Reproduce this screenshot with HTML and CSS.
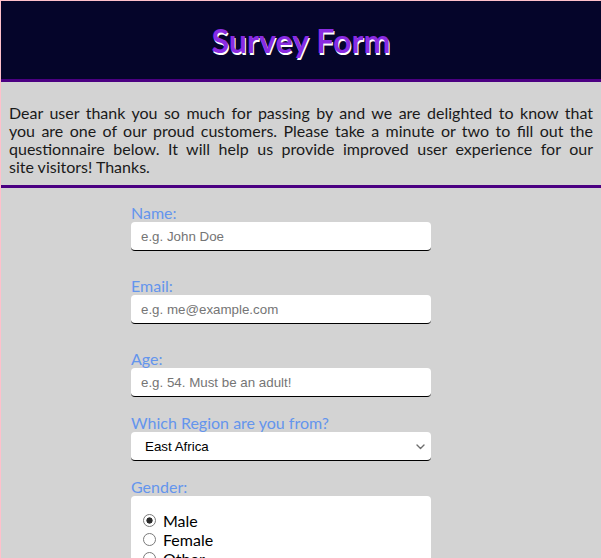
FILE: index.html
```html
<!DOCTYPE html>
<html lang="en">
<head>
<meta charset="utf-8">
<title>Survey Form</title>
<link rel="stylesheet" href="styles.css">
</head>
<body>
<div class="page">
  <header class="header">
    <h1 class="title">Survey Form</h1>
  </header>
  <section class="intro">
    <p class="intro-text"><span class="line">Dear user thank you so much for passing by and we are delighted to know that</span> <span class="line">you are one of our proud customers. Please take a minute or two to fill out the</span> <span class="line">questionnaire below. It will help us provide improved user experience for our</span> <span class="line line-last">site visitors! Thanks.</span></p>
  </section>
  <form class="form">
    <div class="group group-wide">
      <label class="label" for="name">Name:</label>
      <input class="field" id="name" type="text" placeholder="e.g. John Doe">
    </div>
    <div class="group group-wide">
      <label class="label" for="email">Email:</label>
      <input class="field" id="email" type="email" placeholder="e.g. me@example.com">
    </div>
    <div class="group">
      <label class="label" for="age">Age:</label>
      <input class="field" id="age" type="number" placeholder="e.g. 54. Must be an adult!">
    </div>
    <div class="group">
      <label class="label" for="region">Which Region are you from?</label>
      <div class="select-wrap">
        <select class="field select" id="region">
          <option>East Africa</option>
          <option>West Africa</option>
        </select>
        <svg class="chevron" width="9" height="6" viewBox="0 0 9 6" aria-hidden="true">
          <path d="M1 1 L4.5 4.5 L8 1" fill="none" stroke="#6e6e6e" stroke-width="1.4" stroke-linecap="round" stroke-linejoin="round"/>
        </svg>
      </div>
    </div>
    <div class="group">
      <span class="label">Gender:</span>
      <div class="radio-box">
        <label class="radio-row"><input class="radio" type="radio" name="gender" checked>Male</label>
        <label class="radio-row"><input class="radio" type="radio" name="gender">Female</label>
        <label class="radio-row"><input class="radio" type="radio" name="gender">Other</label>
      </div>
    </div>
  </form>
</div>
</body>
</html>
```
FILE: styles.css
```css
html, body {
  margin: 0;
  padding: 0;
}
body {
  background: #d3d3d3;
  font-family: Lato, "Noto Sans", sans-serif;
  font-size: 16px;
  border-top: 1px solid #ffc0cb;
  border-left: 1px solid #ffc0cb;
}
.page {
  min-height: 557px;
}
.header {
  background: #05052a;
  height: 78px;
  border-bottom: 3px solid #4b0082;
  display: flex;
  align-items: center;
  justify-content: center;
}
.title {
  margin: 0;
  font-size: 32px;
  font-weight: 700;
  color: #8a2be2;
  text-shadow: 1px 2px 0 #ffffff;
  letter-spacing: 0.1px;
}
.intro {
  padding: 22px 8px 9px;
  border-bottom: 3px solid #4b0082;
}
.intro-text {
  margin: 0;
  line-height: 18px;
  color: #1a1a1a;
}
.line {
  display: block;
  white-space: nowrap;
  text-align: justify;
  text-align-last: justify;
}
.line-last {
  text-align: left;
  text-align-last: left;
}
.form {
  width: 340px;
  margin: 0 auto;
  padding-top: 16px;
}
.group {
  margin-bottom: 17px;
}
.group-wide {
  margin-bottom: 26px;
}
.label {
  display: block;
  color: #6495ed;
  line-height: 18px;
}
.field {
  display: block;
  box-sizing: border-box;
  width: 300px;
  height: 29px;
  margin: 0;
  padding: 0 10px;
  border: none;
  border-bottom: 1px solid #000;
  border-radius: 4px;
  background: #fff;
  font-family: "Liberation Sans", Arial, sans-serif;
  font-size: 13.333px;
  color: #000;
  outline: none;
}
.field::placeholder {
  color: #757575;
}
.select-wrap {
  position: relative;
  width: 300px;
}
.select {
  appearance: none;
  -webkit-appearance: none;
  padding-left: 14px;
}
.chevron {
  position: absolute;
  right: 6px;
  top: 12px;
  pointer-events: none;
}
.radio-box {
  width: 300px;
  box-sizing: border-box;
  background: #fff;
  border-radius: 4px;
  padding: 15px 12px;
}
.radio-row {
  display: flex;
  align-items: center;
  line-height: 19px;
  color: #000;
}
.radio {
  appearance: none;
  -webkit-appearance: none;
  width: 13px;
  height: 13px;
  margin: 0 7px 0 0;
  border: 1px solid #7a7a7a;
  border-radius: 50%;
  background: #fff;
  box-sizing: border-box;
}
.radio:checked {
  background: radial-gradient(circle, #2a2a2a 0 2.8px, #fff 3.4px);
}
```
